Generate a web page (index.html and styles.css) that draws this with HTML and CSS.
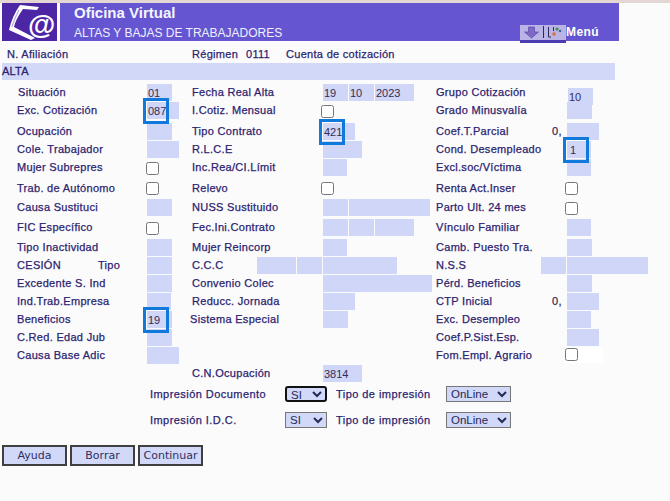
FILE: index.html
```html
<!DOCTYPE html>
<html lang="es">
<head>
<meta charset="utf-8">
<title>Oficina Virtual</title>
<link rel="stylesheet" href="styles.css">
</head>
<body>
<div class="strip"></div>
<header class="header">
  <div class="logo">
    <svg width="55" height="38" viewBox="0 0 55 38">
      <path d="M18 2 L37 4 L35 7 L21 6 C16 13 13 19 12 24 L33 35 L29 37 L7 27 C9 18 13 9 18 2 Z" fill="#fff"/>
      <path d="M17 7 C14 13 11 19 10 24" fill="none" stroke="#b9a9e6" stroke-width="1.2"/>
      <text x="26" y="31" class="logo-at">@</text>
    </svg>
  </div>
  <div class="banner">
    <div class="titles">
      <div class="title">Oficina Virtual</div>
      <div class="subtitle">ALTAS Y BAJAS DE TRABAJADORES</div>
    </div>
    <div class="menu">
      <span class="menu-btn">
        <svg width="45" height="15" viewBox="0 0 45 15">
          <path d="M8.500 2 H14.500 V7 H18.500 L11.500 13 L4.500 7 H8.500 Z" fill="#7d68c4" stroke="#5d4aa8" stroke-width="0.7"/>
          <path d="M23.500 1 V13 M28.500 2 V12 H31" fill="none" stroke="#2f2a55" stroke-width="1"/>
          <path d="M33.500 2 V6" fill="none" stroke="#2f2a55" stroke-width="1"/>
          <circle cx="37" cy="4" r="1.500" fill="#3f8f3f"/><circle cx="40" cy="6" r="1.300" fill="#3a6a9a"/>
          <circle cx="34" cy="9" r="1.700" fill="#d8702a"/>
        </svg>
      </span>
      <span class="menu-label">Menú</span>
    </div>
  </div>
</header>
<div class="info">
  <span class="info-a">N. Afiliación</span>
  <span class="info-b">Régimen</span>
  <span class="info-c">0111</span>
  <span>Cuenta de cotización</span>
</div>
<div class="alta">ALTA</div>

<main class="form">
  <div class="l l1">Situación</div><div><span class="f w25">01</span></div>
  <div class="l">Fecha Real Alta</div><div class="fs"><span class="f w25">19</span><span class="f w25">10</span><span class="f w39">2023</span></div>
  <div class="l">Grupo Cotización</div><div><span class="f w25 grupo">10</span></div>

  <div class="l">Exc. Cotización</div><div><span class="f w32">087<i class="focus"></i></span></div>
  <div class="l">I.Cotiz. Mensual</div><div><input type="checkbox" class="c c3"></div>
  <div class="l">Grado Minusvalía</div><div><span class="f w25"></span></div>

  <div class="l">Ocupación</div><div><span class="f w25"></span></div>
  <div class="l">Tipo Contrato</div><div><span class="f w32">421<i class="focus"></i></span></div>
  <div class="l">Coef.T.Parcial</div><div class="pre"><b>0,</b><span class="f w32"></span></div>

  <div class="l">Cole. Trabajador</div><div><span class="f w32"></span></div>
  <div class="l">R.L.C.E</div><div><span class="f w39"></span></div>
  <div class="l">Cond. Desempleado</div><div><span class="f w24 in">1<i class="focus"></i></span></div>

  <div class="l">Mujer Subrepres</div><div><input type="checkbox" class="c c3"></div>
  <div class="l">Inc.Rea/CI.Límit</div><div><span class="f w24"></span></div>
  <div class="l">Excl.soc/Víctima</div><div><span class="f w24"></span></div>

  <div class="l">Trab. de Autónomo</div><div><input type="checkbox" class="c c2"></div>
  <div class="l">Relevo</div><div><input type="checkbox" class="c c2"></div>
  <div class="l">Renta Act.Inser</div><div><input type="checkbox" class="c c2"></div>

  <div class="l">Causa Sustituci</div><div><span class="f w25"></span></div>
  <div class="l">NUSS Sustituido</div><div class="fs"><span class="f w25"></span><span class="f w81"></span></div>
  <div class="l">Parto Ult. 24 mes</div><div><input type="checkbox" class="c c3"></div>

  <div class="l">FIC Específico</div><div><input type="checkbox" class="c c3"></div>
  <div class="l">Fec.Ini.Contrato</div><div class="fs"><span class="f w25"></span><span class="f w25"></span><span class="f w39"></span></div>
  <div class="l">Vínculo Familiar</div><div><span class="f w24"></span></div>

  <div class="l">Tipo Inactividad</div><div><span class="f w25"></span></div>
  <div class="l">Mujer Reincorp</div><div><span class="f w24"></span></div>
  <div class="l">Camb. Puesto Tra.</div><div><span class="f w25"></span></div>

  <div class="l split"><span>CESIÓN</span><span class="tipo">Tipo</span></div><div><span class="f w25"></span></div>
  <div class="l split"><span>C.C.C</span><span class="fs ccc"><span class="f w39"></span><span class="f w25"></span></span></div><div><span class="f w74"></span></div>
  <div class="l split"><span>N.S.S</span><span class="f w25 nss"></span></div><div><span class="f w81"></span></div>

  <div class="l">Excedente S. Ind</div><div><span class="f w25"></span></div>
  <div class="l">Convenio Colec</div><div><span class="f w109"></span></div>
  <div class="l">Pérd. Beneficios</div><div><span class="f w25"></span></div>

  <div class="l">Ind.Trab.Empresa</div><div><span class="f w24"></span></div>
  <div class="l">Reducc. Jornada</div><div><span class="f w32"></span></div>
  <div class="l">CTP Inicial</div><div class="pre"><b>0,</b><span class="f w32"></span></div>

  <div class="l">Beneficios</div><div><span class="f w25">19<i class="focus"></i></span></div>
  <div class="l sis">Sistema Especial</div><div><span class="f w25"></span></div>
  <div class="l">Exc. Desempleo</div><div><span class="f w24"></span></div>

  <div class="l">C.Red. Edad Jub</div><div><span class="f w25"></span></div>
  <div></div><div></div>
  <div class="l">Coef.P.Sist.Esp.</div><div><span class="f w32"></span></div>

  <div class="l">Causa Base Adic</div><div><span class="f w32"></span></div>
  <div></div><div></div>
  <div class="l">Fom.Empl. Agrario</div><div class="whitebox"><input type="checkbox" class="c c2"></div>

  <div></div><div></div>
  <div class="l">C.N.Ocupación</div><div><span class="f w39">3814</span></div>
  <div></div><div></div>
</main>

<section class="print">
  <div class="print-row">
    <span class="pl">Impresión Documento</span>
    <select class="sel sel-si sel-focus"><option>SI</option></select>
    <span class="pt">Tipo de impresión</span>
    <select class="sel sel-on"><option>OnLine</option></select>
  </div>
  <div class="print-row">
    <span class="pl">Impresión I.D.C.</span>
    <select class="sel sel-si"><option>SI</option></select>
    <span class="pt">Tipo de impresión</span>
    <select class="sel sel-on"><option>OnLine</option></select>
  </div>
</section>

<div class="buttons">
  <button class="btn">Ayuda</button>
  <button class="btn">Borrar</button>
  <button class="btn">Continuar</button>
</div>
</body>
</html>
```
FILE: styles.css
```css
* { box-sizing: border-box; }
html, body { margin: 0; padding: 0; }
body {
  width: 670px;
  height: 501px;
  overflow: hidden;
  background: #fbfbfb;
  font-family: "Liberation Sans", Arial, sans-serif;
  font-size: 11px;
  color: #2b2370;
}
.strip { height: 3px; background: #e4d6d2; }
.header { display: flex; margin-left: 2px; height: 38px; width: 617px; gap: 3px; }
.logo { width: 55px; background: #4d26a6; flex: none; }
.logo svg { display: block; }
.logo-at { font: bold 28px "Liberation Sans", sans-serif; fill: #fff; }
.banner {
  flex: 1;
  background: #6555d1;
  color: #fff;
  display: flex;
  justify-content: space-between;
  position: relative;
  padding-left: 14px;
}
.title { font-size: 15px; font-weight: bold; line-height: 16px; margin-top: 2px; color: #f4f6ff; }
.subtitle { font-size: 12px; line-height: 16px; margin-top: 4px; color: #eef0ff; }
.menu { position: absolute; left: 460px; top: 22px; display: flex; align-items: flex-start; }
.menu-btn {
  display: block;
  width: 46px;
  height: 18px;
  background: #b9b3e6;
  border-bottom: 3px solid #4a3bb0;
}
.menu-btn svg { display: block; }
.menu-label { font-size: 12px; font-weight: bold; letter-spacing: .4px; line-height: 15px; }

.info { display: flex; height: 22px; padding-top: 4px; align-items: center; letter-spacing: .3px; -webkit-text-stroke: .25px; }
.info-a { margin-left: 7px; width: 185px; }
.info-b { width: 54px; }
.info-c { width: 40px; }
.alta { margin-left: 2px; width: 613px; height: 17px; line-height: 17px; background: #d2d8f8; font-size: 11px; letter-spacing: .2px; -webkit-text-stroke: .3px; }

.form {
  display: grid;
  margin-top: 4px;
  padding-left: 17px;
  grid-template-columns: 130px 45px 131px 113px 131px 103px;
  grid-template-rows: 18px 21px 18px 18px 21px 19px 20px 20px 18px 18px 18px 18px 18px 18px 18px 18px;
}
.form > div { min-width: 0; }
.l { line-height: 17px; height: 17px; white-space: nowrap; letter-spacing: .3px; -webkit-text-stroke: .25px; }
.l1 { padding-left: 1px; }
.split { display: flex; }
.tipo { margin-left: 37px; }
.nss { margin-left: 75px; }
.ccc { margin-left: 34px; }
.sis { margin-left: -2px; }
.fs { display: flex; gap: 1px; }
.f {
  display: block;
  position: relative;
  height: 17px;
  line-height: 19px;
  background: #d0d6f8;
  color: #332d55;
  font-size: 11px;
  letter-spacing: 0;
  padding-left: 1px;
  flex: none;
  -webkit-text-stroke: 0;
}
.w24 { width: 24px; }
.w25 { width: 25px; }
.w32 { width: 32px; }
.w39 { width: 39px; }
.w74 { width: 74px; }
.w81 { width: 81px; }
.w109 { width: 109px; }
.grupo { margin: 4px 0 0 1px; }
.in { padding-left: 3px; }
.focus {
  position: absolute;
  z-index: 1;
  left: -4px;
  top: -4px;
  width: 26px;
  height: 26px;
  border: 3px solid #1178dc;
}
.pre { position: relative; }
.pre b {
  position: absolute;
  left: -15px;
  top: 0;
  line-height: 17px;
  font-weight: normal;
  letter-spacing: .3px;
  -webkit-text-stroke: .25px;
  color: #332d55;
}
.c { display: block; width: 13px; height: 13px; margin: 0 0 0 -2px; }
.c2 { margin-top: 2px; }
.c3 { margin-top: 3px; }
.form > div:nth-child(6n+2) .c { margin-left: -1px; }
.whitebox { background: #fff; width: 38px; height: 16px; margin-left: -2px; }
.whitebox .c { margin-left: 0; margin-top: 1px; }

.print { margin-top: 3px; }
.print-row {
  display: flex;
  align-items: center;
  height: 16px;
  margin-bottom: 10px;
  letter-spacing: .45px;
  -webkit-text-stroke: .25px;
}
.pl { margin-left: 150px; width: 135px; }
.pt { margin-left: 9px; width: 110px; }
.sel {
  height: 16px;
  padding: 0;
  background-color: #d2d8f8;
  border: 1px solid #767676;
  border-radius: 0;
  color: #222a55;
  font-family: "Liberation Sans", Arial, sans-serif;
  font-size: 11.5px;
  letter-spacing: 0;
  -webkit-text-stroke: 0;
}
.sel-si { width: 42px; }
.sel-on { width: 65px; }
.sel-focus { border: 2px solid #111; border-radius: 3px; }

.buttons { display: flex; gap: 3px; margin: 17px 0 0 2px; }
.btn {
  width: 65px;
  height: 21px;
  padding: 0;
  background: #d2d8f8;
  border: 2px solid #3f3f3f;
  color: #2f2f62;
  font-family: "DejaVu Sans", Verdana, sans-serif;
  font-size: 11px;
}
```
